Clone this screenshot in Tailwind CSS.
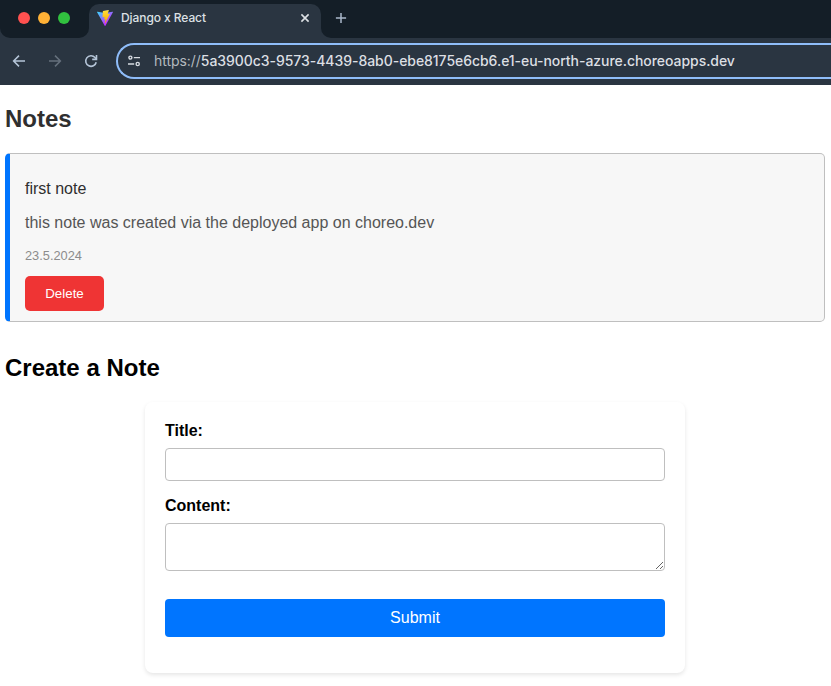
<!DOCTYPE html>
<html lang="en">
<head>
<meta charset="utf-8">
<title>Django x React</title>
<script src="https://cdn.jsdelivr.net/npm/@tailwindcss/browser@4"></script>
</head>
<body class="h-[686px] w-[831px] overflow-hidden bg-white font-['Liberation_Sans',Arial,sans-serif] text-base text-black">
<header class="h-[85px] bg-[#2a3541] font-[Inter,sans-serif]">
  <div class="flex h-[38px]">
    <div class="flex w-[89px] gap-2 rounded-b-[10px] bg-[#141e27] pt-3 pl-[18px]">
      <span class="size-3 rounded-full bg-[#ff5150]"></span>
      <span class="size-3 rounded-full bg-[#ffb136]"></span>
      <span class="size-3 rounded-full bg-[#31c13f]"></span>
    </div>
    <div class="w-[232px] bg-linear-to-b from-[#141e27] from-60% to-[#2a3541] to-60% pt-1">
      <div class="flex h-[34px] items-center rounded-t-[10px] bg-[#2a3541] pr-2.5 pb-[6px] pl-2">
        <svg class="size-4" viewBox="0 0 256 257">
          <defs>
            <linearGradient id="vite-body" x1="-.8%" x2="57.6%" y1="7.7%" y2="78.4%"><stop offset="0%" stop-color="#41D1FF"/><stop offset="100%" stop-color="#BD34FE"/></linearGradient>
            <linearGradient id="vite-bolt" x1="43.4%" x2="50.3%" y1="2.2%" y2="89%"><stop offset="0%" stop-color="#FFEA83"/><stop offset="8.3%" stop-color="#FFDD35"/><stop offset="100%" stop-color="#FFA800"/></linearGradient>
          </defs>
          <path fill="url(#vite-body)" d="M255.153 37.938L134.897 252.976c-2.483 4.44-8.862 4.466-11.382.048L.875 37.958c-2.746-4.814 1.371-10.646 6.827-9.67l120.385 21.517a6.537 6.537 0 0 0 2.322-.004l117.867-21.483c5.438-.991 9.574 4.796 6.877 9.62Z"/>
          <path fill="url(#vite-bolt)" d="M185.432.063L96.44 17.501a3.268 3.268 0 0 0-2.634 3.014l-5.474 92.456a3.268 3.268 0 0 0 3.997 3.378l24.777-5.718c2.318-.535 4.413 1.507 3.936 3.838l-7.361 36.047c-.495 2.426 1.782 4.5 4.151 3.78l15.304-4.649c2.372-.72 4.652 1.36 4.15 3.788l-11.698 56.621c-.732 3.542 3.979 5.473 5.943 2.437l1.313-2.028l72.516-144.72c1.215-2.423-.88-5.186-3.54-4.672l-25.505 4.922c-2.396.462-4.435-1.77-3.759-4.114l16.646-57.705c.677-2.35-1.37-4.583-3.769-4.113Z"/>
        </svg>
        <span class="ml-2 text-xs font-medium tracking-[-0.08px] text-[#dde1e5]">Django x React</span>
        <svg class="ml-auto size-3 text-[#dde1e5]" viewBox="0 0 12 12" fill="none" stroke="currentColor" stroke-width="1.6"><path d="M2.4 2.4l7.2 7.2M9.6 2.4L2.4 9.6"/></svg>
      </div>
    </div>
    <div class="flex-1 rounded-bl-[10px] bg-[#141e27] pt-3 pl-[14px]">
      <svg class="size-3 text-[#a9b8ca]" viewBox="0 0 12 12" fill="none" stroke="currentColor" stroke-width="1.5"><path d="M6 .9v10.2M.9 6h10.2"/></svg>
    </div>
  </div>
  <div class="flex h-[47px] items-start pt-[5px] pl-[11px]">
    <div class="flex h-9 w-[105px] items-center gap-5">
      <svg class="size-4 text-[#b5c5d8]" viewBox="0 0 16 16" fill="none" stroke="currentColor" stroke-width="1.5"><path d="M14 8H3M8 2.6L2.6 8 8 13.4"/></svg>
      <svg class="size-4 text-[#65707c]" viewBox="0 0 16 16" fill="none" stroke="currentColor" stroke-width="1.5"><path d="M2 8h11M8 2.6L13.4 8 8 13.4"/></svg>
      <svg class="size-4 text-[#b5c5d8]" viewBox="0 0 16 16" fill="none" stroke="currentColor" stroke-width="1.6"><path d="M13.2 9.2A5.3 5.3 0 1 1 12 4.5l1.3 1.4"/><path d="M13.5 2v4.4H9.2"/></svg>
    </div>
    <div class="flex h-9 flex-1 items-center rounded-l-full border-2 border-r-0 border-[#8fbdf9] pl-2.5">
      <svg class="h-3 w-3 text-[#d5dae0]" viewBox="0 0 12 12" fill="none" stroke="currentColor" stroke-width="1.4"><circle cx="2.4" cy="2.6" r="1.5"/><path d="M5.8 2.6H12M0 9h6.2"/><circle cx="9.7" cy="9" r="1.6"/></svg>
      <span class="ml-[14px] text-sm font-medium tracking-[-0.048px] whitespace-nowrap text-[#dcdfe3]"><span class="font-normal text-[#b4babf]">https://</span>5a3900c3-9573-4439-8ab0-ebe8175e6cb6.e1-eu-north-azure.choreoapps.dev</span>
    </div>
  </div>
</header>
<main class="px-[5px] pt-5">
  <h2 class="text-2xl leading-7 font-bold text-[#2f2f2f]">Notes</h2>
  <article class="mt-5 mr-px h-[169px] rounded-[5px] border border-l-[5px] border-[#bfbfbf] border-l-[#0075ff] bg-[#f7f7f7] pt-[26px] pl-[15px]">
    <p class="leading-[18px] text-[#2f2f2f]">first note</p>
    <p class="mt-4 leading-[18px] text-[#555]">this note was created via the deployed app on choreo.dev</p>
    <p class="mt-4 text-[12.8px] leading-[15px] text-[#8c8c8c]">23.5.2024</p>
    <button class="mt-[13px] block h-[35px] w-[79px] rounded-[5px] bg-[#ef3434] text-[13.333px] leading-[15px] text-white">Delete</button>
  </article>
  <h2 class="mt-8 text-2xl leading-7 font-bold">Create a Note</h2>
  <form class="mt-5 ml-[140px] h-[271px] w-[540px] rounded-lg px-5 pt-5 shadow-[0_2px_4px_rgba(0,0,0,0.1)]">
    <label class="block leading-[18px] font-bold" for="title">Title:</label>
    <input id="title" class="mt-2 block h-[33px] w-full rounded-sm border border-[#bfbfbf]">
    <label class="mt-4 block leading-[18px] font-bold" for="content">Content:</label>
    <textarea id="content" class="mt-2 block h-12 w-full resize rounded-sm border border-[#bfbfbf]"></textarea>
    <button type="button" class="mt-7 block h-[38px] w-full rounded-sm bg-[#0075ff] text-white">Submit</button>
  </form>
</main>
</body>
</html>
